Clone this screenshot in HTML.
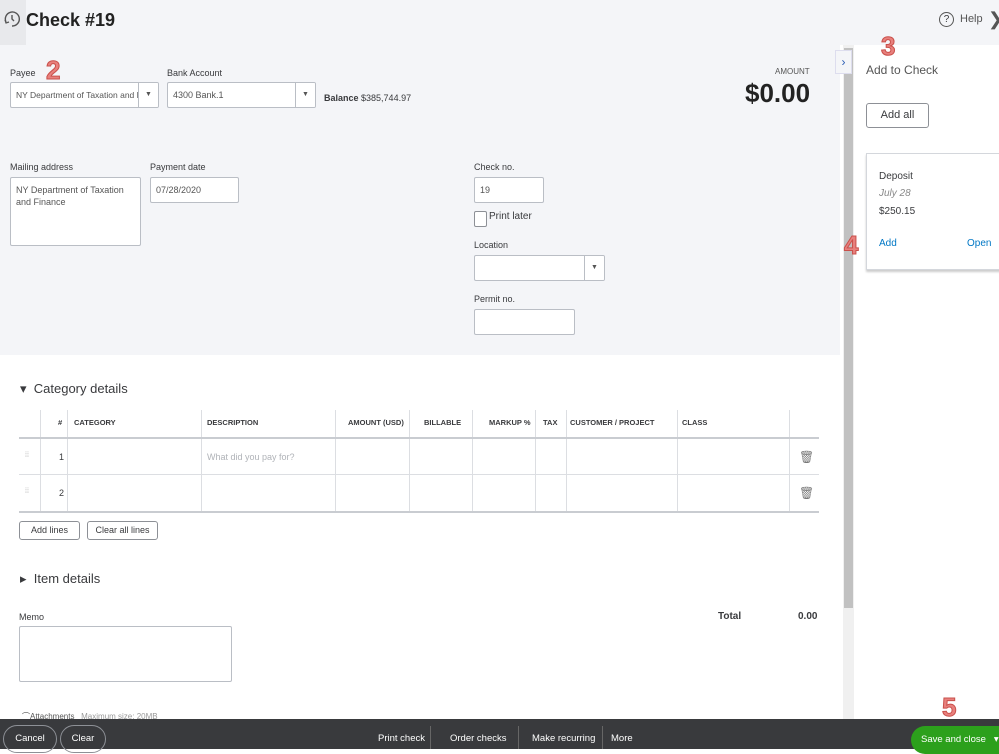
<!DOCTYPE html>
<html><head><meta charset="utf-8"><style>
*{box-sizing:border-box;margin:0;padding:0}
body{width:999px;height:749px;overflow:hidden;position:relative;font-family:"Liberation Sans",sans-serif;background:#fff;color:#393a3d}
.a{position:absolute}
.lbl{font-size:9px;color:#393a3d}
.inp{position:absolute;background:#fff;border:1px solid #babec5;border-radius:2px;font-size:9px;color:#555;padding:0 5px;overflow:hidden;white-space:nowrap}
.dd{position:absolute;right:0;top:0;bottom:0;width:20px;border-left:1px solid #babec5;font-size:7px;text-align:center;background:#fff}
.th{position:absolute;top:418px;font-size:7.5px;font-weight:bold;color:#393a3d}
.vl{position:absolute;width:1px;background:#dcdee2}
.hl{position:absolute;left:19px;width:800px;height:2px;background:#c9ccd1}
.btn{position:absolute;border:1px solid #8d9096;border-radius:3px;background:#fff;font-size:9px;text-align:center}
.red{position:absolute;color:#e8807d;font-weight:bold;font-size:26px;-webkit-text-stroke:1px #c9504b;font-family:"Liberation Sans",sans-serif}
.bb{position:absolute;top:733px;font-size:9.5px;color:#fff}
</style></head><body>
<div class="a" style="left:0;top:0;width:999px;height:45px;background:#f4f5f8"></div>
<div class="a" style="left:0;top:45px;width:840px;height:310px;background:#f4f5f8"></div>
<div class="a" style="left:0;top:0;width:26px;height:45px;background:#e8e9ec"></div>
<svg class="a" style="left:3px;top:10px" width="18" height="18" viewBox="0 0 18 18"><path d="M3 12 A7 7 0 1 1 9 16" fill="none" stroke="#555" stroke-width="1.4"/><path d="M9 5v4l2 2" fill="none" stroke="#555" stroke-width="1.4"/><path d="M2 10l1 3 3-1" fill="none" stroke="#555" stroke-width="1.2"/></svg>
<div class="a" style="left:26px;top:10px;font-size:18px;font-weight:bold;color:#222">Check #19</div>
<div class="a" style="left:939px;top:12px;width:15px;height:15px;border:1.3px solid #555;border-radius:50%;font-size:10px;text-align:center;line-height:13px">?</div>
<div class="a" style="left:960px;top:13px;font-size:11px;color:#555">Help</div>
<div class="a" style="left:988px;top:9px;font-size:18px;color:#555">❯</div>

<div class="red" style="left:46px;top:55px">2</div>
<div class="a lbl" style="left:10px;top:68px">Payee</div>
<div class="inp" style="left:10px;top:82px;width:149px;height:26px;line-height:24px;font-size:8.5px">NY Department of Taxation and F<div class="dd" style="line-height:24px">▼</div></div>
<div class="a lbl" style="left:167px;top:68px">Bank Account</div>
<div class="inp" style="left:167px;top:82px;width:149px;height:26px;line-height:24px">4300 Bank.1<div class="dd" style="line-height:24px">▼</div></div>
<div class="a" style="left:324px;top:93px;font-size:9px"><b>Balance</b> $385,744.97</div>
<div class="a" style="left:775px;top:67px;font-size:8px;color:#555">AMOUNT</div>
<div class="a" style="left:745px;top:78px;font-size:26px;font-weight:bold;color:#222">$0.00</div>

<div class="a lbl" style="left:10px;top:162px">Mailing address</div>
<div class="inp" style="left:10px;top:177px;width:131px;height:69px;padding-top:6px;line-height:12px;white-space:normal">NY Department of Taxation and Finance</div>
<div class="a lbl" style="left:150px;top:162px">Payment date</div>
<div class="inp" style="left:150px;top:177px;width:89px;height:26px;line-height:24px">07/28/2020</div>
<div class="a lbl" style="left:474px;top:162px">Check no.</div>
<div class="inp" style="left:474px;top:177px;width:70px;height:26px;line-height:24px">19</div>
<div class="a" style="left:474px;top:211px;width:13px;height:16px;border:1px solid #8d9096;border-radius:2px;background:#fff"></div>
<div class="a" style="left:489px;top:211px;font-size:10px">Print later</div>
<div class="a lbl" style="left:474px;top:240px">Location</div>
<div class="inp" style="left:474px;top:255px;width:131px;height:26px"><div class="dd" style="line-height:24px">▼</div></div>
<div class="a lbl" style="left:474px;top:294px">Permit no.</div>
<div class="inp" style="left:474px;top:309px;width:101px;height:26px"></div>

<div class="a" style="left:20px;top:381px;font-size:13px">▾ &nbsp;Category details</div>
<div class="th" style="left:58px">#</div>
<div class="th" style="left:74px">CATEGORY</div>
<div class="th" style="left:207px">DESCRIPTION</div>
<div class="th" style="left:348px">AMOUNT (USD)</div>
<div class="th" style="left:424px">BILLABLE</div>
<div class="th" style="left:489px">MARKUP %</div>
<div class="th" style="left:543px">TAX</div>
<div class="th" style="left:570px">CUSTOMER / PROJECT</div>
<div class="th" style="left:682px">CLASS</div>
<div class="vl" style="left:40px;top:410px;height:102px"></div>
<div class="vl" style="left:67px;top:410px;height:102px"></div>
<div class="vl" style="left:201px;top:410px;height:102px"></div>
<div class="vl" style="left:335px;top:410px;height:102px"></div>
<div class="vl" style="left:409px;top:410px;height:102px"></div>
<div class="vl" style="left:472px;top:410px;height:102px"></div>
<div class="vl" style="left:535px;top:410px;height:102px"></div>
<div class="vl" style="left:566px;top:410px;height:102px"></div>
<div class="vl" style="left:677px;top:410px;height:102px"></div>
<div class="vl" style="left:789px;top:410px;height:102px"></div>
<div class="hl" style="top:437px"></div>
<div class="a" style="left:19px;top:474px;width:800px;height:1px;background:#dcdee2"></div>
<div class="hl" style="top:511px"></div>
<div class="a" style="left:25px;top:452px;font-size:7px;color:#aaa">⁞⁞</div>
<div class="a" style="left:25px;top:488px;font-size:7px;color:#aaa">⁞⁞</div>
<div class="a" style="left:59px;top:452px;font-size:9px">1</div>
<div class="a" style="left:59px;top:488px;font-size:9px">2</div>
<div class="a" style="left:207px;top:452px;font-size:9px;color:#b0b3b8">What did you pay for?</div>
<div class="a" style="left:799px;top:450px;font-size:12px;color:#777">🗑</div>
<div class="a" style="left:799px;top:486px;font-size:12px;color:#777">🗑</div>
<div class="btn" style="left:19px;top:521px;width:61px;height:19px;line-height:17px">Add lines</div>
<div class="btn" style="left:87px;top:521px;width:71px;height:19px;line-height:17px">Clear all lines</div>

<div class="a" style="left:20px;top:571px;font-size:13px">▸ &nbsp;Item details</div>
<div class="a lbl" style="left:19px;top:612px">Memo</div>
<div class="inp" style="left:19px;top:626px;width:213px;height:56px"></div>
<div class="a" style="left:718px;top:611px;font-size:10px;font-weight:bold">Total</div>
<div class="a" style="left:798px;top:611px;font-size:10px;font-weight:bold">0.00</div>
<div class="a" style="left:22px;top:711px;font-size:8px;color:#555">⌒Attachments &nbsp;&nbsp;<span style="color:#999">Maximum size: 20MB</span></div>

<div class="a" style="left:843px;top:45px;width:11px;height:674px;background:#f0f0f0"></div>
<div class="a" style="left:844px;top:48px;width:9px;height:560px;background:#c1c1c1"></div>
<div class="a" style="left:835px;top:50px;width:17px;height:24px;background:#f4f5f8;border:1px solid #dde;color:#2d5fb5;font-size:12px;text-align:center;line-height:22px">›</div>
<div class="red" style="left:881px;top:31px">3</div>
<div class="a" style="left:866px;top:63px;font-size:12px;color:#555">Add to Check</div>
<div class="btn" style="left:866px;top:103px;width:63px;height:25px;line-height:23px;font-size:11px">Add all</div>
<div class="a" style="left:866px;top:153px;width:140px;height:117px;border:1px solid #d4d7dc;box-shadow:0 2px 2px #ccc;background:#fff"></div>
<div class="a" style="left:879px;top:171px;font-size:10px">Deposit</div>
<div class="a" style="left:879px;top:188px;font-size:10px;font-style:italic;color:#888">July 28</div>
<div class="a" style="left:879px;top:206px;font-size:10px">$250.15</div>
<div class="a" style="left:879px;top:238px;font-size:10px;color:#0077c5">Add</div>
<div class="a" style="left:967px;top:238px;font-size:10px;color:#0077c5">Open</div>
<div class="red" style="left:844px;top:230px">4</div>

<div class="a" style="left:0;top:719px;width:999px;height:30px;background:#393a3d"></div>
<div class="a" style="left:3px;top:725px;width:54px;height:28px;border:1px solid #8d9096;border-radius:14px;color:#fff;font-size:9.5px;text-align:center;line-height:26px">Cancel</div>
<div class="a" style="left:60px;top:725px;width:46px;height:28px;border:1px solid #8d9096;border-radius:14px;color:#fff;font-size:9.5px;text-align:center;line-height:26px">Clear</div>
<div class="bb" style="left:378px">Print check</div>
<div class="a" style="left:430px;top:726px;width:1px;height:23px;background:#666"></div>
<div class="bb" style="left:450px">Order checks</div>
<div class="a" style="left:518px;top:726px;width:1px;height:23px;background:#666"></div>
<div class="bb" style="left:532px">Make recurring</div>
<div class="a" style="left:602px;top:726px;width:1px;height:23px;background:#666"></div>
<div class="bb" style="left:611px">More</div>
<div class="a" style="left:911px;top:726px;width:100px;height:28px;border-radius:14px 0 0 14px;background:#2ca01c;color:#fff;font-size:9.5px;line-height:27px;padding-left:10px">Save and close &nbsp;&nbsp;▾</div>
<div class="red" style="left:942px;top:692px">5</div>
</body></html>
